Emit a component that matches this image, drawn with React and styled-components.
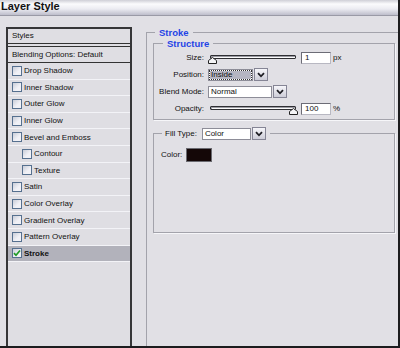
import React from 'react';
import styled, { createGlobalStyle } from 'styled-components';

const Global = createGlobalStyle`
  html, body { margin: 0; padding: 0; background: #e1e0e5; }
  body {
    width: 400px; height: 348px; overflow: hidden;
    font-family: "Liberation Sans", Arial, sans-serif;
    -webkit-font-smoothing: antialiased;
  }
  * { box-sizing: border-box; }
`;

const Window = styled.div`
  width: 400px;
  height: 348px;
  border-right: 2px solid #1c1c1e;
  border-bottom: 2px solid #1c1c1e;
  background: #e1e0e5;
  display: flex;
  flex-direction: column;
  overflow: hidden;
`;

const TitleBar = styled.div`
  height: 16px;
  flex: none;
  border-bottom: 1px solid #9a9aa6;
  background: linear-gradient(#cfcfd7 0px, #fbfbfd 4px, #ebebf1 9px, #bebecb 15px);
  font-weight: bold;
  font-size: 11px;
  line-height: 13px;
  color: #111;
  padding-left: 1px;
`;

const Body = styled.div`
  flex: 1;
  display: flex;
  padding: 11px 0 0 6px;
  min-height: 0;
`;

const StylePanel = styled.div`
  width: 126px;
  flex: none;
  border: 2px solid #363638;
  border-bottom: none;
  background: #dfdee3;
  display: flex;
  flex-direction: column;
`;

const PanelHeader = styled.div`
  height: ${p => p.$h}px;
  font-size: 8px;
  line-height: ${p => p.$h - 2}px;
  color: #111;
  padding-left: 4px;
  border-top: ${p => (p.$top ? '1px solid #333' : 'none')};
  border-bottom: 1px solid #333;
  margin-bottom: ${p => p.$gap || 0}px;
  background: #dfdee3;
`;

const StyleRow = styled.div`
  height: 16.6px;
  flex: none;
  display: flex;
  align-items: center;
  gap: 2px;
  padding-left: ${p => (p.$indent ? 14 : 4)}px;
  border-bottom: 1px solid #f3f3f7;
  background: ${p => (p.$active ? '#b2b2bb' : '#dfdee3')};
  font-size: 8px;
  font-weight: ${p => (p.$active ? 'bold' : 'normal')};
  color: #111;
  white-space: nowrap;
`;

const Box = styled.span`
  width: 10px;
  height: 10px;
  flex: none;
  border: 1px solid #56708f;
  background: linear-gradient(135deg, #c9cdd8, #f1f1f6 60%);
  display: flex;
  align-items: center;
  justify-content: center;
`;

const RightPane = styled.div`
  flex: 1;
  display: flex;
  flex-direction: column;
  padding-left: 14px;
  min-width: 0;
`;

const StrokeSet = styled.fieldset`
  flex: 1;
  margin: 0;
  padding: 0 3px 0 6px;
  border: none;
  border-top: 1px solid #a3a3ab;
  border-left: 1px solid #a3a3ab;
  min-width: 0;
`;

const Legend = styled.legend`
  padding: 0 4px;
  margin-left: ${p => p.$ml}px;
  font-size: ${p => p.$size}px;
  font-weight: bold;
  line-height: 11px;
  color: #1f44e6;
`;

const Group = styled.fieldset`
  margin: ${p => p.$mt || 0}px 0 0 0;
  padding: ${p => p.$pad};
  border: 1px solid #a3a3ab;
  box-shadow: 1px 1px 0 #f6f6f9;
  min-width: 0;
`;

const FormGrid = styled.div`
  display: grid;
  grid-template-columns: 50px auto;
  column-gap: 4px;
  row-gap: 4px;
  grid-auto-rows: 13px;
  align-items: center;
`;

const Label = styled.span`
  font-size: 8px;
  color: #111;
  text-align: right;
  white-space: nowrap;
`;

const Controls = styled.div`
  display: flex;
  align-items: center;
  gap: ${p => p.$gap ?? 3}px;
  height: 13px;
`;

const SliderWrap = styled.div`
  position: relative;
  width: 90px;
  height: 13px;
`;

const Track = styled.div`
  margin: 4px 2px 0;
  height: 4px;
  border: 1px solid #2e2e33;
  border-radius: 1px;
  background: #fafafa;
  box-shadow: inset 1px 1px 0 #9a9aa2;
`;

const Thumb = styled.svg`
  position: absolute;
  top: 6px;
`;

const NumInput = styled.div`
  width: 30px;
  height: 12px;
  background: #fff;
  border: 1px solid #b8b8c2;
  border-top-color: #6c6c76;
  border-left-color: #6c6c76;
  font-size: 8px;
  line-height: 10px;
  padding-left: 3px;
  color: #111;
`;

const Unit = styled.span`
  font-size: 8px;
  color: #111;
  margin-left: -1px;
`;

const SelectBox = styled.div`
  width: ${p => p.$w}px;
  height: 12px;
  background: #fff;
  border: 1px solid #8d8d98;
  font-size: 8px;
  line-height: 10px;
  color: #111;
  padding: 0 1px;
  display: flex;
  align-items: center;
`;

const FocusText = styled.span`
  flex: 1;
  height: 8px;
  line-height: 8px;
  padding-left: 1px;
  background: #b5b5c2;
  outline: 1px dotted #333;
`;

const ArrowBtn = styled.div`
  width: 14px;
  height: 13px;
  border: 1px solid #858595;
  background: linear-gradient(#f6f6fa, #cdcdd8);
  display: flex;
  align-items: center;
  justify-content: center;
`;

const FillLegend = styled.legend`
  padding: 0 4px 0 3px;
  margin-left: 8px;
  display: flex;
  align-items: center;
  gap: 5px;
`;

const FillBody = styled.div`
  height: 92px;
  padding: 8px 0 0 7px;
  display: flex;
  align-items: flex-start;
  gap: 4px;
`;

const ColorLabel = styled.span`
  font-size: 8px;
  color: #111;
  line-height: 14px;
`;

const Swatch = styled.div`
  width: 26px;
  height: 14px;
  background: #140707;
  border: 1px solid #6a6a70;
`;

const Check = () => (
  <svg width="8" height="8" viewBox="0 0 8 8">
    <path d="M1 4.2 L3 6.3 L7 1.5" fill="none" stroke="#1f9a25" strokeWidth="1.7" />
  </svg>
);

const Checkbox = ({ checked }) => <Box>{checked && <Check />}</Box>;

const Chevron = () => (
  <svg width="8" height="6" viewBox="0 0 8 6">
    <path d="M1 1.2 L4 4.3 L7 1.2" fill="none" stroke="#1e1e24" strokeWidth="1.8" />
  </svg>
);

const Slider = ({ value }) => (
  <SliderWrap>
    <Track />
    <Thumb width="9" height="7" viewBox="0 0 9 7" style={{ left: `${(value / 100) * 81}px` }}>
      <path d="M0.5 6.5 L0.5 3.5 L4.5 0.5 L8.5 3.5 L8.5 6.5 Z" fill="#f4f4f6" stroke="#222" strokeWidth="1" />
    </Thumb>
  </SliderWrap>
);

const Select = ({ width, value, focused }) => (
  <Controls $gap={1}>
    <SelectBox $w={width}>{focused ? <FocusText>{value}</FocusText> : <span style={{ paddingLeft: 1 }}>{value}</span>}</SelectBox>
    <ArrowBtn><Chevron /></ArrowBtn>
  </Controls>
);

const styleItems = [
  { name: 'Drop Shadow' },
  { name: 'Inner Shadow' },
  { name: 'Outer Glow' },
  { name: 'Inner Glow' },
  { name: 'Bevel and Emboss' },
  { name: 'Contour', indent: true },
  { name: 'Texture', indent: true },
  { name: 'Satin' },
  { name: 'Color Overlay' },
  { name: 'Gradient Overlay' },
  { name: 'Pattern Overlay' },
  { name: 'Stroke', active: true },
];

export default function App() {
  return (
    <>
      <Global />
      <Window>
        <TitleBar>Layer Style</TitleBar>
        <Body>
          <StylePanel>
            <PanelHeader $h={15} $gap={2}>Styles</PanelHeader>
            <PanelHeader $h={17} $top>Blending Options: Default</PanelHeader>
            {styleItems.map(it => (
              <StyleRow key={it.name} $indent={it.indent} $active={it.active}>
                <Checkbox checked={it.active} />
                {it.name}
              </StyleRow>
            ))}
          </StylePanel>
          <RightPane>
            <StrokeSet>
              <Legend $ml={2} $size={9.5}>Stroke</Legend>
              <Group $pad="2px 0 4px 0">
                <Legend $ml={9} $size={9.5}>Structure</Legend>
                <FormGrid>
                  <Label>Size:</Label>
                  <Controls>
                    <Slider value={0} />
                    <NumInput>1</NumInput>
                    <Unit>px</Unit>
                  </Controls>
                  <Label>Position:</Label>
                  <Select width={45} value="Inside" focused />
                  <Label>Blend Mode:</Label>
                  <Select width={64} value="Normal" />
                  <Label>Opacity:</Label>
                  <Controls>
                    <Slider value={100} />
                    <NumInput>100</NumInput>
                    <Unit>%</Unit>
                  </Controls>
                </FormGrid>
              </Group>
              <Group $mt={7} $pad="0">
                <FillLegend>
                  <Label>Fill Type:</Label>
                  <Select width={49} value="Color" />
                </FillLegend>
                <FillBody>
                  <ColorLabel>Color:</ColorLabel>
                  <Swatch />
                </FillBody>
              </Group>
            </StrokeSet>
          </RightPane>
        </Body>
      </Window>
    </>
  );
}
